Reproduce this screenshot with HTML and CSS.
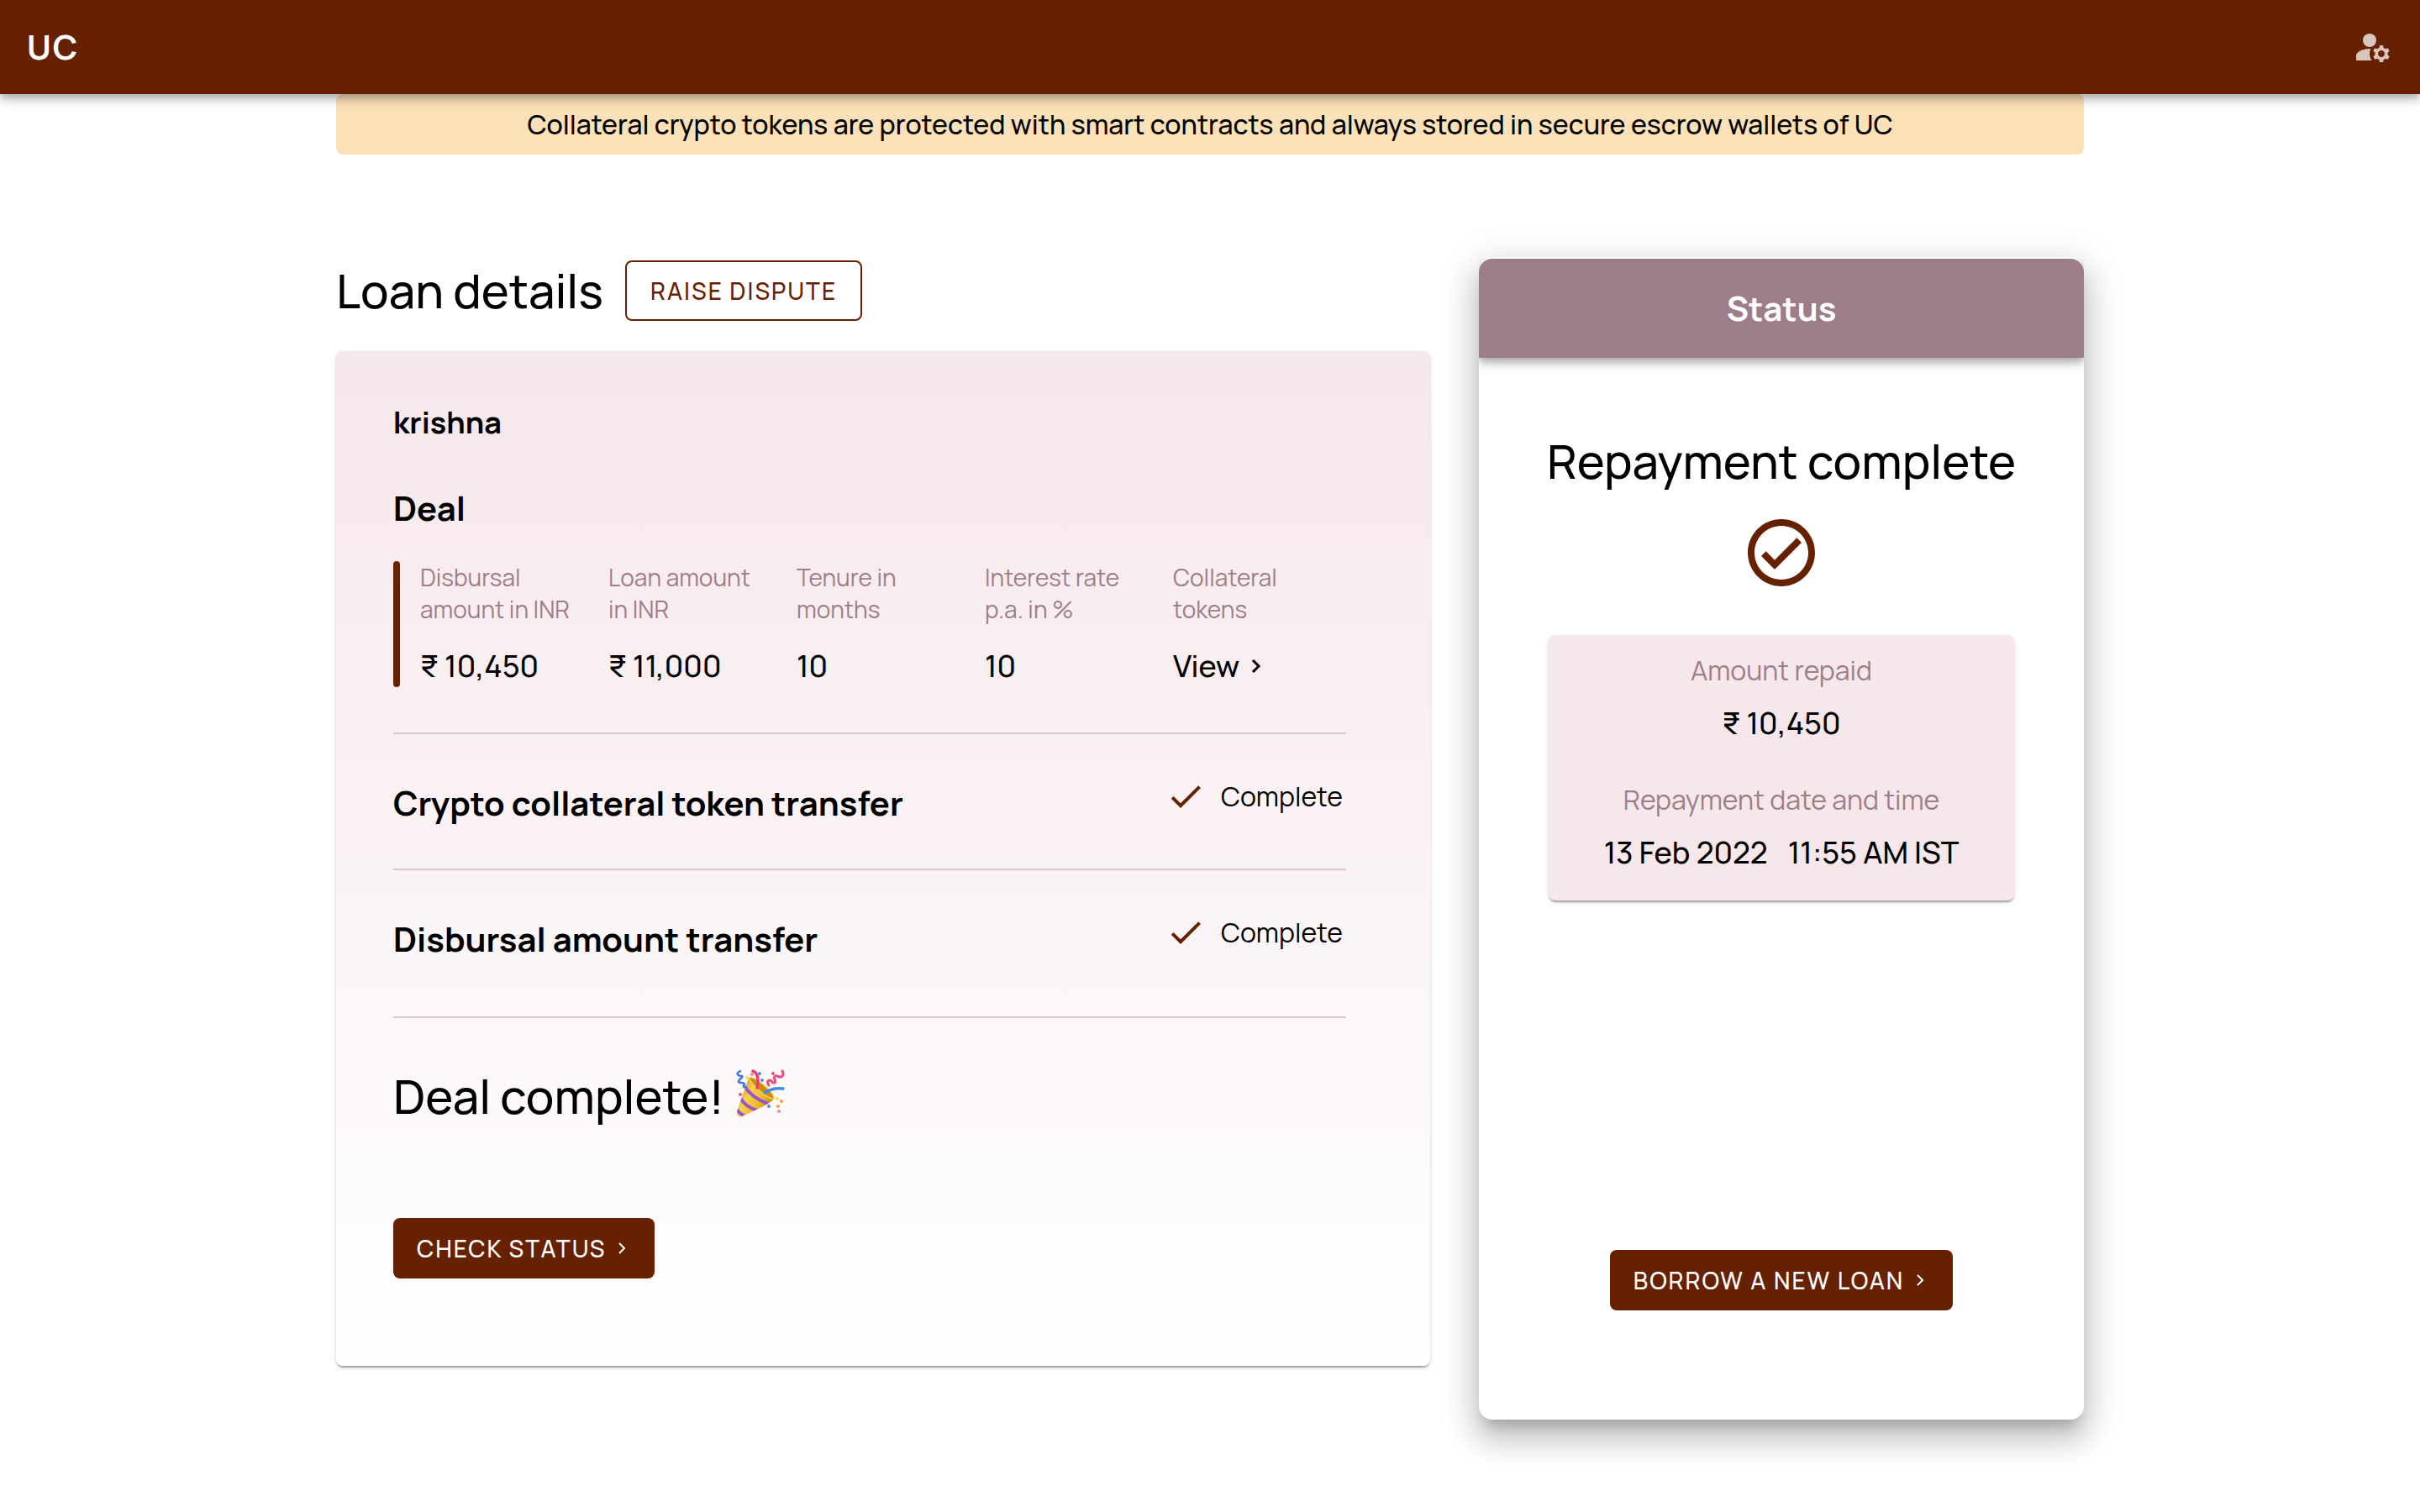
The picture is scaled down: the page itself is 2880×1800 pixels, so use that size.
FILE: index.html
```html
<!DOCTYPE html>
<html lang="en">
<head>
<meta charset="utf-8">
<meta name="viewport" content="width=device-width, initial-scale=1">
<title>UC – Loan details</title>
<link rel="stylesheet" href="styles.css">
</head>
<body>
<header class="topbar">
  <a class="brand" href="#">UC</a>
  <button class="account" type="button" aria-label="Manage account">
    <svg class="icon" viewBox="0 0 24 24" aria-hidden="true"><circle cx="10" cy="8" r="4"/><path d="M10.67 13.02C10.45 13.01 10.23 13 10 13c-2.42 0-4.68.67-6.61 1.82-.88.52-1.39 1.5-1.39 2.53V20h9.26c-.79-1.13-1.26-2.51-1.26-4 0-1.07.25-2.07.67-2.98zM20.75 16c0-.22-.03-.42-.06-.63l1.14-1.01-1-1.73-1.45.49c-.32-.27-.68-.48-1.08-.63L18 11h-2l-.3 1.49c-.4.15-.76.36-1.08.63l-1.45-.49-1 1.73 1.14 1.01c-.03.21-.06.41-.06.63s.03.42.06.63l-1.14 1.01 1 1.73 1.45-.49c.32.27.68.48 1.08.63L16 21h2l.3-1.49c.4-.15.76-.36 1.08-.63l1.45.49 1-1.73-1.14-1.01c.03-.21.06-.41.06-.63zM17 18c-1.1 0-2-.9-2-2s.9-2 2-2 2 .9 2 2-.9 2-2 2z"/></svg>
  </button>
</header>

<main class="page">
  <p class="banner">Collateral crypto tokens are protected with smart contracts and always stored in secure escrow wallets of UC</p>

  <div class="columns">
    <section class="loan">
      <div class="loan-head">
        <h1 class="headline">Loan details</h1>
        <button class="btn btn-outline" type="button">RAISE DISPUTE</button>
      </div>

      <article class="card">
        <h2 class="borrower">krishna</h2>
        <h3 class="title">Deal</h3>
        <div class="deal">
          <span class="deal-bar"></span>
          <dl class="facts">
            <div class="fact"><dt>Disbursal amount in INR</dt><dd>₹ 10,450</dd></div>
            <div class="fact"><dt>Loan amount in INR</dt><dd>₹ 11,000</dd></div>
            <div class="fact"><dt>Tenure in months</dt><dd>10</dd></div>
            <div class="fact"><dt>Interest rate p.a. in %</dt><dd>10</dd></div>
            <div class="fact"><dt>Collateral tokens</dt><dd><a class="view" href="#">View<svg class="chevron" viewBox="0 0 12 20" aria-hidden="true"><path d="M2 3l7 7-7 7"/></svg></a></dd></div>
          </dl>
        </div>

        <div class="step">
          <h3 class="title">Crypto collateral token transfer</h3>
          <p class="state"><svg class="icon" viewBox="0 0 24 24" aria-hidden="true"><path d="M9 16.17 4.83 12l-1.42 1.41L9 19 21 7l-1.41-1.41z"/></svg>Complete</p>
        </div>
        <div class="step step-last">
          <h3 class="title">Disbursal amount transfer</h3>
          <p class="state"><svg class="icon" viewBox="0 0 24 24" aria-hidden="true"><path d="M9 16.17 4.83 12l-1.42 1.41L9 19 21 7l-1.41-1.41z"/></svg>Complete</p>
        </div>

        <h2 class="headline done">Deal complete!
          <svg class="party" viewBox="0 0 58 58" role="img" aria-label="Party popper">
            <defs>
              <linearGradient id="gold" x1="0" y1="0.2" x2="1" y2="0.8">
                <stop offset="0" stop-color="#c98a1c"/><stop offset=".35" stop-color="#f7d24a"/><stop offset=".65" stop-color="#ecb82b"/><stop offset="1" stop-color="#b87614"/>
              </linearGradient>
              <clipPath id="cone"><path d="M15 10C21 13 41 28 45 35 43 40 20 50 7 56 3 57 0 54 1 50z"/></clipPath>
            </defs>
            <path fill="url(#gold)" d="M15 10C21 13 41 28 45 35 43 40 20 50 7 56 3 57 0 54 1 50z"/>
            <g clip-path="url(#cone)" fill="none" stroke="#9a55c9" stroke-width="4">
              <path d="M10 20C16 30 27 37 38 41"/><path d="M5 34C9 41 15 46 25 49"/><path d="M0 47C3 51 6 54 11 56"/>
            </g>
            <path fill="#c98d1b" stroke="#f5cf4d" stroke-width="1.5" d="M15 10C22 7 46 28 45 35 39 36 19 20 15 10z"/>
            <g fill="none" stroke-linecap="round">
              <path stroke="#e83e6b" stroke-width="3.5" d="M20 2C26 4 27 13 25 22"/>
              <path stroke="#4686e6" stroke-width="3.5" d="M34 28C41 23 48 22 56 23"/>
              <path stroke="#3f78dc" stroke-width="2.5" d="M5 2C-1 5 2 8 7 8 9 10 2 12 3 15 5 17 10 15 10 18 8 20 9 22 11 21"/>
              <path stroke="#ea4d78" stroke-width="3" d="M39 19C36 15 38 11 42 14 45 18 48 16 46 12 44 7 48 7 51 9 56 10 57 6 55 2"/>
            </g>
            <g fill="#4a8be8"><circle cx="28" cy="5" r="2"/><circle cx="31" cy="13" r="2"/><circle cx="39" cy="44" r="2"/></g>
            <g fill="#ec4c77"><circle cx="44" cy="5" r="2"/><circle cx="5" cy="30" r="2"/></g>
            <g fill="#ee83b4"><circle cx="19" cy="6" r="2"/><circle cx="51" cy="50" r="2"/></g>
            <g fill="#f5e04e"><circle cx="13" cy="10" r="2"/><circle cx="49" cy="35" r="2"/></g>
            <g fill="#f5a13f"><circle cx="54" cy="38" r="2"/><circle cx="50" cy="44" r="2"/></g>
          </svg>
        </h2>
        <button class="btn btn-solid" type="button">CHECK STATUS<svg class="chevron" viewBox="0 0 12 20" aria-hidden="true"><path d="M2 4l6 6-6 6"/></svg></button>
      </article>
    </section>

    <aside class="status">
      <h2 class="status-head">Status</h2>
      <div class="status-body">
        <p class="headline">Repayment complete</p>
        <svg class="icon status-icon" viewBox="0 0 24 24" aria-hidden="true"><path d="M16.59 7.58 10 14.17l-2.59-2.58L6 13l4 4 8-8zM12 2C6.48 2 2 6.48 2 12s4.48 10 10 10 10-4.48 10-10S17.52 2 12 2zm0 18c-4.42 0-8-3.58-8-8s3.58-8 8-8 8 3.58 8 8-3.58 8-8 8z"/></svg>
        <dl class="summary">
          <dt>Amount repaid</dt>
          <dd>₹ 10,450</dd>
          <dt>Repayment date and time</dt>
          <dd class="when"><span>13 Feb 2022</span><span>11:55 AM IST</span></dd>
        </dl>
        <button class="btn btn-solid" type="button">BORROW A NEW LOAN<svg class="chevron" viewBox="0 0 12 20" aria-hidden="true"><path d="M2 4l6 6-6 6"/></svg></button>
      </div>
    </aside>
  </div>
</main>
</body>
</html>
```

FILE: styles.css
```css
:root {
  --brown: #662200;
  --mauve: #9d7d89;
  --pink: #f6e7ea;
  --line: #dbc8cf;
}

* { box-sizing: border-box; }

body {
  margin: 0;
  background: #fff;
  color: #000;
  font-family: Manrope, Inter, "Noto Sans", sans-serif;
  font-size: 32px;
  font-weight: 500;
  line-height: 40px;
}

h1, h2, h3, p, dl, dd { margin: 0; }
a { color: inherit; text-decoration: none; }

.icon {
  display: block;
  width: 48px;
  height: 48px;
  fill: currentColor;
}

/* Top bar */
.topbar {
  position: sticky;
  top: 0;
  z-index: 1;
  display: flex;
  align-items: center;
  justify-content: space-between;
  height: 112px;
  padding: 0 32px;
  background: var(--brown);
  color: #fff;
  box-shadow: 0 4px 8px -2px rgba(0, 0, 0, .2), 0 8px 10px rgba(0, 0, 0, .14), 0 2px 20px rgba(0, 0, 0, .12);
}

.brand {
  font-size: 40px;
  font-weight: 700;
  letter-spacing: 2px;
}

.account {
  padding: 0;
  border: 0;
  background: none;
  color: #d8c6bd;
}

/* Page */
.page {
  max-width: 2144px;
  margin: 0 auto;
  padding: 0 32px 80px;
}

.banner {
  padding: 16px 32px;
  border-radius: 8px;
  background: #fae1b7;
  text-align: center;
}

.columns {
  display: grid;
  grid-template-columns: minmax(0, 1fr) 720px;
  gap: 58px;
  align-items: start;
  margin-top: 122px;
}

.headline {
  font-size: 56px;
  font-weight: 500;
  line-height: 70px;
}

.loan-head {
  display: flex;
  align-items: center;
  gap: 26px;
  min-height: 80px;
  margin-bottom: 32px;
}

/* Buttons */
.btn {
  display: inline-flex;
  align-items: center;
  height: 72px;
  padding: 0 28px;
  border: 0;
  border-radius: 8px;
  font: inherit;
  font-size: 28px;
  letter-spacing: 2px;
  white-space: nowrap;
}

.btn-outline {
  border: 2px solid var(--brown);
  background: #fff;
  color: var(--brown);
}

.btn-solid {
  background: var(--brown);
  color: #fff;
}

.chevron {
  width: 12px;
  height: 20px;
  margin: 0 4px 0 14px;
  fill: none;
  stroke: currentColor;
  stroke-width: 2;
}

/* Loan card */
.card {
  padding: 61px 100px 104px 68px;
  border-radius: 8px;
  background: linear-gradient(var(--pink), #fff);
  box-shadow: 0 4px 2px -2px rgba(0, 0, 0, .2), 0 2px 2px rgba(0, 0, 0, .14), 0 2px 6px rgba(0, 0, 0, .12);
}

.borrower {
  margin-bottom: 54px;
  font-size: 36px;
  font-weight: 700;
  line-height: 48px;
}

.title {
  font-size: 40px;
  font-weight: 700;
  line-height: 48px;
}

.deal {
  display: flex;
  gap: 24px;
  margin: 39px 0 54px;
}

.deal-bar {
  flex: none;
  width: 8px;
  border-radius: 4px;
  background: var(--brown);
}

.facts {
  display: grid;
  grid-template-columns: repeat(5, 224px);
}

.fact {
  display: flex;
  flex-direction: column;
  gap: 25px;
  padding: 0 32px 1px 0;
}

.fact dt {
  color: var(--mauve);
  font-size: 28px;
  font-weight: 400;
  line-height: 38px;
}

.fact dd,
.summary dd {
  font-size: 36px;
  line-height: 48px;
}

.view {
  display: inline-flex;
  align-items: center;
}

.view .chevron { stroke-width: 3; }

.step {
  display: flex;
  align-items: flex-start;
  justify-content: space-between;
  padding: 50px 4px 52px 0;
  border-top: 2px solid var(--line);
}

.step .title { padding: 8px 0 2px; }

.step-last {
  padding-bottom: 66px;
  border-bottom: 2px solid var(--line);
}

.state {
  display: flex;
  align-items: center;
  gap: 18px;
  font-weight: 400;
}

.state .icon { color: var(--brown); }

.done {
  display: flex;
  align-items: center;
  gap: 14px;
  margin: 58px 0 110px;
}

.party {
  width: 58px;
  height: 58px;
  margin-bottom: 6px;
}

/* Status card */
.status {
  padding-top: 2px;
  border-radius: 16px;
  background: #fff;
  box-shadow: 0 14px 16px -8px rgba(0, 0, 0, .2), 0 24px 34px 4px rgba(0, 0, 0, .14), 0 10px 44px 8px rgba(0, 0, 0, .12);
}

.status-head {
  padding: 35px 24px;
  border-radius: 16px 16px 0 0;
  background: var(--mauve);
  box-shadow: 0 4px 8px -2px rgba(0, 0, 0, .2), 0 8px 10px rgba(0, 0, 0, .14), 0 2px 20px rgba(0, 0, 0, .12);
  clip-path: inset(0 0 -24px 0);
  color: #fff;
  font-size: 40px;
  font-weight: 700;
  line-height: 48px;
  text-align: center;
}

.status-body {
  display: flex;
  flex-direction: column;
  align-items: center;
  padding: 88px 24px 130px;
}

.status-icon {
  width: 96px;
  height: 96px;
  margin: 26px 0 50px;
  color: var(--brown);
}

.summary {
  width: 554px;
  margin-bottom: 416px;
  padding: 22px 24px 33px;
  border-radius: 8px;
  background: var(--pink);
  box-shadow: 0 4px 2px -2px rgba(0, 0, 0, .2), 0 2px 2px rgba(0, 0, 0, .14), 0 2px 6px rgba(0, 0, 0, .12);
  text-align: center;
}

.summary dt {
  color: var(--mauve);
  font-weight: 400;
}

.summary dd { margin-top: 19px; }
.summary dd + dt { margin-top: 47px; }

.when {
  display: flex;
  justify-content: center;
  gap: 24px;
  white-space: nowrap;
}
```
